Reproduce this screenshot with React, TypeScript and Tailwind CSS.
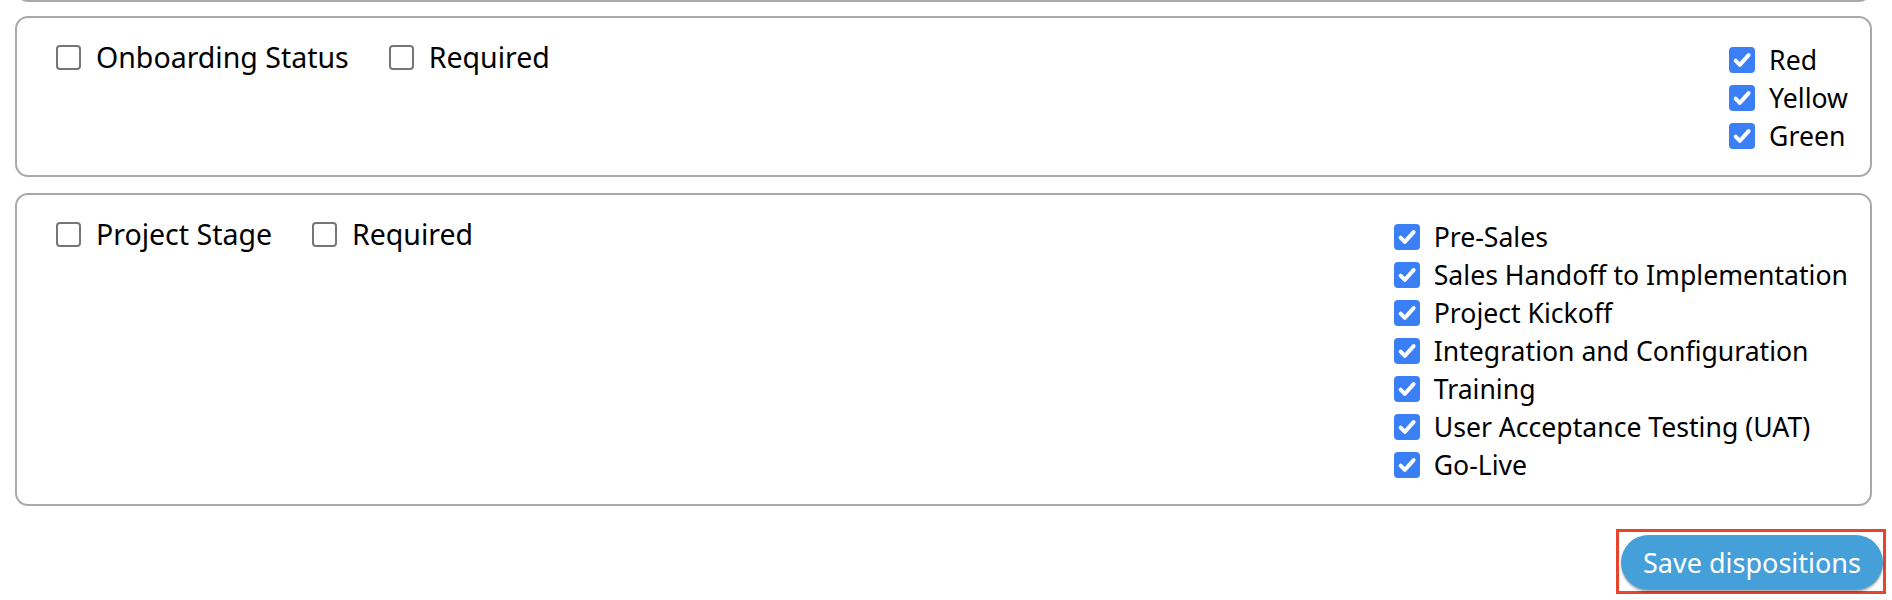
import React from "react";

function Box({ checked }: { checked: boolean }) {
  if (checked) {
    return (
      <span className="flex h-[26px] w-[26px] shrink-0 items-center justify-center rounded-[4px] bg-[#3a7ff5]">
        <svg viewBox="0 0 16 16" className="h-[22px] w-[22px]">
          <path
            d="M3.4 8.5l3 3L12.8 4.4"
            stroke="white"
            strokeWidth="2.9"
            fill="none"
            strokeLinecap="round"
            strokeLinejoin="round"
          />
        </svg>
      </span>
    );
  }
  return <span className="block h-[25px] w-[25px] shrink-0 rounded-[4px] border-2 border-[#767676] bg-white" />;
}

function Card({ label, options }: { label: string; options: string[] }) {
  return (
    <div className="flex items-start justify-between rounded-[13px] border-2 border-[#a9a9a9] bg-white pb-[20px] pl-[39px] pr-[22px] pt-[21px]">
      <div className="flex items-center pt-[1px] text-[28.5px] leading-[34px]">
        <Box checked={false} />
        <span className="ml-[15px]">{label}</span>
        <span className="ml-[40px]">
          <Box checked={false} />
        </span>
        <span className="ml-[15px]">Required</span>
      </div>
      <div className="mt-[2px] flex flex-col text-[26.6px]">
        {options.map((o) => (
          <div key={o} className="flex h-[38px] items-center">
            <Box checked={true} />
            <span className="ml-[14px] whitespace-nowrap">{o}</span>
          </div>
        ))}
      </div>
    </div>
  );
}

export default function App() {
  return (
    <div
      className="min-h-[600px] w-full bg-white pl-[15px] pr-[6px] text-[28px] leading-[38px] text-black"
      style={{ fontFamily: '"Noto Sans", "Open Sans", sans-serif' }}
    >
      <div className="mr-[14px] flex flex-col">
        <div className="-mt-[38px] h-[40px] rounded-[13px] border-2 border-[#a9a9a9]" />
        <div className="mt-[14px]">
          <Card label="Onboarding Status" options={["Red", "Yellow", "Green"]} />
        </div>
        <div className="mt-[16px]">
          <Card
            label="Project Stage"
            options={[
              "Pre-Sales",
              "Sales Handoff to Implementation",
              "Project Kickoff",
              "Integration and Configuration",
              "Training",
              "User Acceptance Testing (UAT)",
              "Go-Live",
            ]}
          />
        </div>
      </div>
      <div className="mt-[23px] flex justify-end">
        <div className="border-[3px] border-[#e8432c] pb-[1px] pl-[2px] pt-[3px]">
          <button className="flex h-[55px] w-[262px] items-center justify-center rounded-full bg-[#459fd9] text-[27px] text-white shadow-[0_2px_2px_rgba(0,0,0,0.3)]">
            Save dispositions
          </button>
        </div>
      </div>
    </div>
  );
}
